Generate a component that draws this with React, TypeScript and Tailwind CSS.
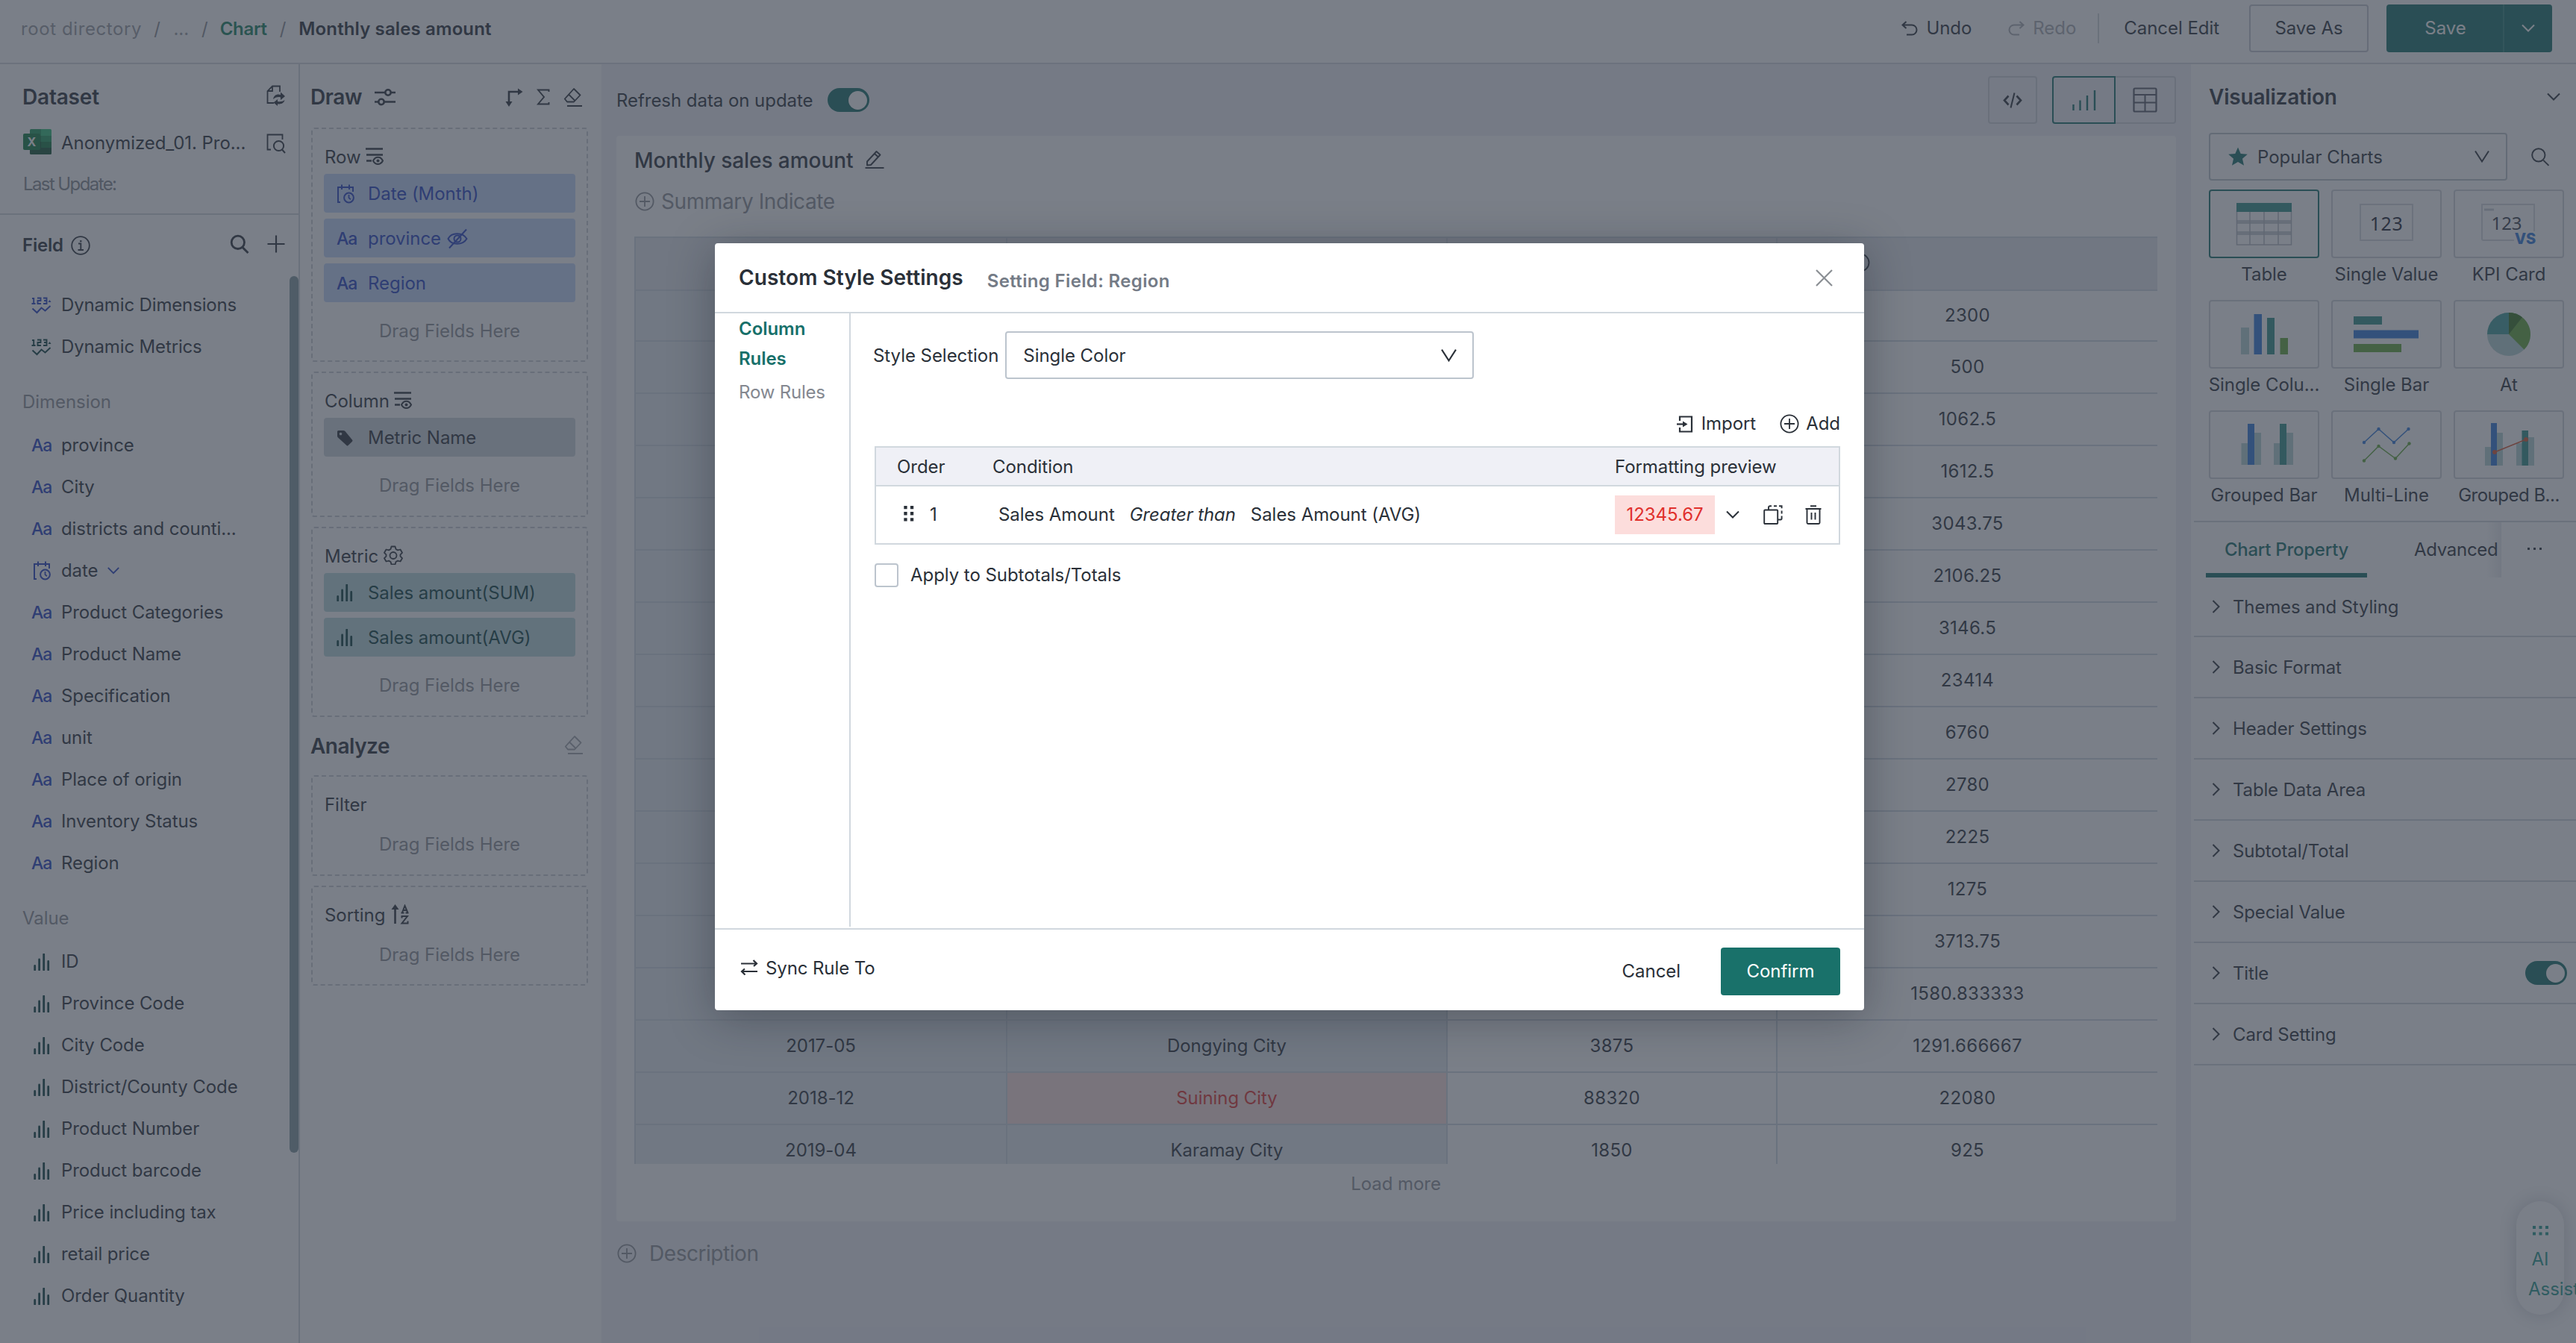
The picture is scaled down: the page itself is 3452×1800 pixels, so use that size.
import type { ReactNode } from "react";

type IconProps = { className?: string; children?: ReactNode; box?: string };

function Svg({ className = "", children, box = "0 0 24 24" }: IconProps) {
  return (
    <svg
      viewBox={box}
      fill="none"
      stroke="currentColor"
      strokeWidth={2}
      className={"block shrink-0 " + className}
    >
      {children}
    </svg>
  );
}

const SearchIcon = ({ className = "size-[26px]", w = 2.6 }: { className?: string; w?: number }) => (
  <Svg className={className}>
    <circle cx="10" cy="10" r="8" strokeWidth={w} />
    <path d="M16 16.5L22.6 23" strokeWidth={w} />
  </Svg>
);

const Chevron = ({ className = "" }: { className?: string }) => (
  <Svg className={className} box="0 0 20 20">
    <path d="M2 5.5l8 8 8-8" />
  </Svg>
);

const VChevron = ({ className = "" }: { className?: string }) => (
  <Svg className={className} box="0 0 20 20">
    <path d="M1 2.5L10 16.5 19 2.5" />
  </Svg>
);

const PlusCircle = ({ className = "size-[26px]" }: { className?: string }) => (
  <Svg className={className} box="0 0 26 26">
    <circle cx="13" cy="13" r="11.6" strokeWidth="1.8" />
    <path d="M13 6v14M6 13h14" strokeWidth="1.8" />
  </Svg>
);

const BarsIcon = ({ className = "text-[#0b3f3e]" }: { className?: string }) => (
  <Svg className={"h-[23px] w-[22px] " + className} box="0 0 22 23">
    <path d="M1.7 16.5V22M7.6 8V22M13.7 1V22M19.7 10.5V22" strokeWidth="2.8" strokeLinecap="round" />
  </Svg>
);

const CalendarIcon = () => (
  <Svg className="h-[26px] w-6 text-[#2440c2]" box="0 0 24 26">
    <path d="M5 24H2V4h20v6M7 0.5V7M17 0.5V7" strokeWidth="2" />
    <circle cx="16.5" cy="18" r="6.4" />
    <path d="M16.5 14v4.2l2.4 2" strokeWidth="1.8" />
  </Svg>
);

const DynamicIcon = ({ className }: { className: string }) => (
  <Svg className={"h-[23px] w-[27px] " + className} box="0 0 27 23">
    <path d="M1 2h2.2v7M0.5 9h5M8 1.5h4.500v3.500H8.500v4h4.500M16 1.500h4.500v7.500H16M17 5h3.500" strokeWidth="1.900" />
    <path d="M22.500 7l2-3 2 3z" fill="currentColor" stroke="none" />
    <path d="M1.500 15.500l6 5.500 6-6.500 5 4 7-6.500" strokeWidth="2" />
  </Svg>
);

const AaIcon = () => (
  <span className="text-[23px] font-medium tracking-[-1px] text-[#2440c2]">Aa</span>
);

const EraserIcon = ({ className = "" }: { className?: string }) => (
  <Svg className={"size-[26px] " + className} box="0 0 26 26">
    <path d="M5 19.500L1.800 15.500 14 2l8.500 8.500-8.500 9z" strokeWidth="1.800" strokeLinejoin="round" />
    <path d="M7 9.500l8.500 8.500M5 25h20" strokeWidth="1.800" />
  </Svg>
);

const LinesEyeIcon = () => (
  <Svg className="-ml-[2px] h-6 w-[25px]" box="0 0 25 24">
    <path d="M0 2.500h23M1 10.500h22M1 18.500h7" strokeWidth="2.400" />
    <path d="M10 18.500c3-6.500 10-6.500 13 0c-3 6-10 6-13 0z" strokeWidth="2" />
    <circle cx="16.500" cy="18.500" r="2" fill="currentColor" stroke="none" />
  </Svg>
);

const SlidersIcon = () => (
  <Svg className="h-[24px] w-[28px]" box="0 0 28 24">
    <path d="M0 6h14M22 6h6M0 18.500h5M13 18.500h15" strokeWidth="2.600" />
    <circle cx="18" cy="6" r="3.700" strokeWidth="2.600" />
    <circle cx="9" cy="18.500" r="3.700" strokeWidth="2.600" />
  </Svg>
);

const GearIcon = () => (
  <Svg className="-ml-[1px] size-[26px]" box="0 0 26 26">
    <path
      d="M10.500 1.500h5l1 3.500 2.500 1.400 3.500-.9 2.500 4.300-2.500 2.600v2.200l2.500 2.600-2.500 4.300-3.500-.9-2.500 1.400-1 3.500h-5l-1-3.500L7 20.600l-3.500.9L1 17.200l2.500-2.600v-2.200L1 9.800l2.500-4.300 3.500.9L9.500 5z"
      strokeWidth="1.800"
      strokeLinejoin="round"
    />
    <circle cx="13" cy="13.500" r="4.500" strokeWidth="1.800" />
  </Svg>
);

const GripIcon = () => (
  <svg viewBox="0 0 14 22" className="h-[21px] w-[14px] shrink-0" fill="currentColor">
    <path d="M0 0h4.500v4.500H0zM9 0h4.500v4.500H9zM0 8.500h4.500v4.500H0zM9 8.500h4.500v4.500H9zM0 17h4.500v4.500H0zM9 17h4.500v4.500H9z" />
  </svg>
);

function Toggle() {
  return (
    <div className="flex h-8 w-14 shrink-0 items-center justify-end rounded-full bg-[#17706a] pr-[3px]">
      <div className="size-[25px] rounded-full bg-white shadow" />
    </div>
  );
}

/* ---------- top bar ---------- */

function TopBar() {
  return (
    <header className="flex h-[86px] shrink-0 justify-between border-b-2 border-[#d6d9de] bg-white pb-2 pl-7 pr-8">
      <div className="flex items-center whitespace-pre pt-[2px] text-[#999ca1]">
        <span className="tracking-[0.6px]">root directory</span>
        <span className="ml-[16px] tracking-[0.6px] text-[#8a8d92]">/</span>
        <span className="ml-[17px]">...</span>
        <span className="ml-[17px] text-[#8a8d92]">/</span>
        <span className="ml-[16px] font-semibold tracking-[-0.3px] text-[#17805f]">Chart</span>
        <span className="ml-[17px] text-[#8a8d92]">/</span>
        <span className="ml-[17px] font-semibold tracking-[0.12px] text-[#2a3038]">Monthly sales amount</span>
      </div>
      <div className="flex items-center">
        <Svg className="mr-[11px] h-[20px] w-[22px]" box="0 0 22 20">
          <path d="M6.500 1L1.500 5.500l5 4.500M2 5.500h12a6.500 6.500 0 0 1 0 13H7" />
        </Svg>
        <span>Undo</span>
        <div className="ml-[49px] flex items-center text-[#a9acb2]">
          <Svg className="mr-[11px] h-[20px] w-[22px]" box="0 0 22 20">
            <path d="M15.500 1l5 4.500-5 4.500M20 5.500H8a6.500 6.500 0 0 0 0 13h7" />
          </Svg>
          <span>Redo</span>
        </div>
        <div className="ml-[29px] h-10 w-[2px] bg-[#d1d5da]" />
        <span className="ml-[33px]">Cancel Edit</span>
        <div className="ml-10 flex h-16 w-[160px] items-center justify-center rounded border-2 border-[#c3c8cf]">
          Save As
        </div>
        <div className="ml-[24px] flex h-16 w-[222px] items-center rounded bg-[#17706a] text-white">
          <span className="flex h-full w-[158px] items-center justify-center border-r-2 border-[#2f857d] pl-[2px]">
            Save
          </span>
          <span className="flex flex-1 justify-center">
            <Chevron className="size-5" />
          </span>
        </div>
      </div>
    </header>
  );
}

/* ---------- dataset panel ---------- */

type Field = { kind: "text" | "date" | "bars"; label: string };

const dimensions: Field[] = [
  { kind: "text", label: "province" },
  { kind: "text", label: "City" },
  { kind: "text", label: "districts and counti..." },
  { kind: "date", label: "date" },
  { kind: "text", label: "Product Categories" },
  { kind: "text", label: "Product Name" },
  { kind: "text", label: "Specification" },
  { kind: "text", label: "unit" },
  { kind: "text", label: "Place of origin" },
  { kind: "text", label: "Inventory Status" },
  { kind: "text", label: "Region" },
];

const values: Field[] = [
  "ID",
  "Province Code",
  "City Code",
  "District/County Code",
  "Product Number",
  "Product barcode",
  "Price including tax",
  "retail price",
  "Order Quantity",
].map((label) => ({ kind: "bars", label }));

function FieldRow({ field }: { field: Field }) {
  return (
    <div className="flex h-14 items-center pl-[41px]">
      <span className="flex w-[41px] pl-[1px]">
        {field.kind === "text" && <AaIcon />}
        {field.kind === "date" && (
          <span className="pl-[2px]">
            <CalendarIcon />
          </span>
        )}
        {field.kind === "bars" && (
          <span className="pl-[3px]">
            <BarsIcon />
          </span>
        )}
      </span>
      <span className="tracking-[-0.1px]">{field.label}</span>
      {field.kind === "date" && <Chevron className="ml-3 size-[18px] text-[#2440c2]" />}
    </div>
  );
}

function ExcelIcon() {
  return (
    <svg viewBox="0 0 38 34" className="block h-[34px] w-[38px] shrink-0">
      <path d="M9 1.500q0-1.500 1.500-1.500H24v9H9z" fill="#1f9a5c" />
      <path d="M24 0h12.500q1.500 0 1.500 1.500V9H24z" fill="#30bf79" />
      <path d="M9 9h15v8H9z" fill="#187a43" />
      <path d="M24 9h14v8H24z" fill="#1f9a5c" />
      <path d="M9 17h15v8H9z" fill="#145232" />
      <path d="M24 17h14v8H24z" fill="#127a40" />
      <path d="M9 25h29v7.500q0 1.500-1.500 1.500h-26Q9 34 9 32.500z" fill="#145232" />
      <rect x="0" y="6" width="23" height="22" rx="2" fill="#107c41" />
      <text x="11.500" y="23" textAnchor="middle" fontSize="16" fontWeight="700" fill="#fff" fontFamily="Inter, sans-serif">
        X
      </text>
    </svg>
  );
}

function DatasetPanel() {
  return (
    <aside className="relative flex w-[402px] shrink-0 flex-col overflow-hidden border-r-2 border-[#d1d6dd] bg-white">
      <div className="h-[202px] shrink-0 border-b-2 border-[#d1d6dd]">
        <div className="flex h-[88px] items-center justify-between pl-[30px] pr-[18px]">
          <span className="text-[28px] font-semibold tracking-[-0.2px]">Dataset</span>
          <Svg className="-mt-1 h-[28px] w-[25px]" box="0 0 25 28">
            <path d="M10 24H1.500V8L8 1.500h10V9M8 1.500V8H1.500" strokeWidth="1.800" />
            <path d="M9 19c1-6 6-7.500 10-6V9.500l6 5.500-6 5v-3.500c-4-1-7 0-10 2.500z" fill="currentColor" stroke="none" />
            <path d="M24.500 20c-1 4.500-5 6-9.500 5.200V28l-5.500-4.500L15 19v3c4 .7 7 0 9.500-2z" fill="currentColor" stroke="none" />
          </Svg>
        </div>
        <div className="flex h-9 items-center pl-[31px] pr-[17px]">
          <span className="-mt-[4px]">
            <ExcelIcon />
          </span>
          <span className="ml-[13px] flex-1">Anonymized_01. Pro...</span>
          <Svg className="h-[27px] w-[26px]" box="0 0 26 27">
            <path d="M6 21.500H1.500V1.500h20V8" strokeWidth="1.800" />
            <circle cx="16.500" cy="16.500" r="6.600" />
            <path d="M21 21.500l4 4.500" />
          </Svg>
        </div>
        <div className="flex h-[72px] items-center pl-[31px] pt-[2px] tracking-[-1.6px] text-[#85898f]">Last Update:</div>
      </div>
      <div className="flex h-[82px] shrink-0 items-center pl-[30px] pr-[18px]">
        <span className="font-semibold tracking-[-0.2px]">Field</span>
        <Svg className="ml-[10px] size-[26px]" box="0 0 26 26">
          <circle cx="13" cy="13" r="11.800" strokeWidth="1.800" />
          <path d="M10 10.500h3.300v8M9.500 19h7.500M12 7.300h2.500" strokeWidth="1.900" />
        </Svg>
        <SearchIcon className="-mt-1 ml-auto size-[26px]" />
        <Svg className="-mt-1 ml-[24px] size-6">
          <path d="M12 0.500v23M0.500 12h23" strokeWidth="2.200" />
        </Svg>
      </div>
      <div className="flex flex-col pt-[11px]">
        <div className="flex h-14 items-center pl-[42px]">
          <DynamicIcon className="text-[#2440c2]" />
          <span className="ml-[13px] tracking-[-0.15px]">Dynamic Dimensions</span>
        </div>
        <div className="flex h-14 items-center pl-[42px]">
          <DynamicIcon className="text-[#0b3f3e]" />
          <span className="ml-[13px] tracking-[-0.15px]">Dynamic Metrics</span>
        </div>
        <div className="mb-[2px] mt-[18px] flex h-14 items-center pl-[30px] text-[#8d9096]">Dimension</div>
        {dimensions.map((f) => (
          <FieldRow key={f.label} field={f} />
        ))}
        <div className="mb-[2px] mt-[18px] flex h-14 items-center pl-[30px] text-[#8d9096]">Value</div>
        {values.map((f) => (
          <FieldRow key={f.label} field={f} />
        ))}
      </div>
      <div className="absolute right-0 top-[284px] h-[1175px] w-3 rounded-full bg-[#81999f]" />
    </aside>
  );
}

/* ---------- draw panel ---------- */

function Pill({ tone, icon, label, extra }: { tone: string; icon: ReactNode; label: string; extra?: ReactNode }) {
  return (
    <div className={"flex h-[52px] items-center rounded-sm pl-[15px] pt-px " + tone}>
      <span className="flex w-[44px] items-center pl-[2px]">{icon}</span>
      <span>{label}</span>
      {extra}
    </div>
  );
}

function DropBox({
  title,
  icon,
  height,
  children,
}: {
  title: string;
  icon?: ReactNode;
  height: string;
  children?: ReactNode;
}) {
  return (
    <div className={"flex shrink-0 flex-col rounded border-2 border-dashed border-[#c9cdd3] px-[15px] pt-5 " + height}>
      <div className="flex h-8 items-center gap-2 pl-[1px]">
        <span className="pt-[3px]">{title}</span>
        {icon}
      </div>
      {children ? <div className="mt-2 flex flex-col gap-2">{children}</div> : null}
      <div className="flex h-[77px] shrink-0 items-center justify-center pt-px text-[#8d9096]">Drag Fields Here</div>
    </div>
  );
}

const EyeOff = () => (
  <Svg className="ml-2 size-[28px]" box="0 0 28 28">
    <path d="M1.500 14C6 5 21 5 26.500 14C21 23 6 23 1.500 14z" strokeWidth="2" />
    <circle cx="14" cy="14" r="4.500" strokeWidth="2" />
    <path d="M3 26.500L26 1.500" strokeWidth="2" />
  </Svg>
);

const blue = "bg-[#c2d5fa] text-[#2440c2]";
const teal = "bg-[#b8d9dc] text-[#0b3f3e]";

function DrawPanel() {
  return (
    <section className="flex w-[404px] shrink-0 flex-col gap-[13px] bg-white pl-[15px] pr-[18px]">
      <div className="-mb-[16px] flex h-[88px] shrink-0 items-center pr-[7px]">
        <span className="-ml-px text-[28px] font-semibold tracking-[-0.4px]">Draw</span>
        <span className="ml-[17px]">
          <SlidersIcon />
        </span>
        <span className="ml-auto flex items-center gap-[18px]">
          <Svg className="h-[25px] w-[24px]" box="0 0 24 25">
            <path d="M5 20V5h14" strokeWidth="2.600" />
            <path d="M17 0.500l6.500 4.500L17 9.500zM0.500 18h9L5 25z" fill="currentColor" stroke="none" />
          </Svg>
          <Svg className="h-[22px] w-[18px]" box="0 0 18 22">
            <path d="M16.500 4V1.500H2l8 9.500-8 9.500h14.500V18" strokeWidth="1.900" />
          </Svg>
          <EraserIcon />
        </span>
      </div>
      <DropBox title="Row" height="h-[314px]" icon={<LinesEyeIcon />}>
        <Pill tone={blue} icon={<CalendarIcon />} label="Date (Month)" />
        <Pill tone={blue} icon={<AaIcon />} label="province" extra={<EyeOff />} />
        <Pill tone={blue} icon={<AaIcon />} label="Region" />
      </DropBox>
      <DropBox title="Column" height="h-[195px]" icon={<LinesEyeIcon />}>
        <Pill
          tone="bg-[#ced5dc]"
          icon={
            <svg viewBox="0 0 22 22" className="size-[22px]" fill="currentColor">
              <path d="M1 2.500Q1 1 2.500 1H9q1.500 0 2.500 1L21 13.500q1 1 0 2.200L15.500 21q-1 1-2 0L2 10.500q-1-1-1-2.300zM5.500 3.700a1.800 1.800 0 1 0 .01 0z" fillRule="evenodd" />
            </svg>
          }
          label="Metric Name"
        />
      </DropBox>
      <DropBox title="Metric" height="h-[255px]" icon={<GearIcon />}>
        <Pill tone={teal} icon={<BarsIcon />} label="Sales amount(SUM)" />
        <Pill tone={teal} icon={<BarsIcon />} label="Sales amount(AVG)" />
      </DropBox>
      <div className="-my-[3px] flex h-[58px] shrink-0 items-center justify-between pr-[6px]">
        <span className="-ml-px text-[28px] font-semibold tracking-[-0.5px]">Analyze</span>
        <EraserIcon className="-mt-1 text-[#a0a4aa]" />
      </div>
      <DropBox title="Filter" height="h-[135px]" />
      <DropBox
        title="Sorting"
        height="h-[134px]"
        icon={
          <Svg className="h-[27px] w-[24px]" box="0 0 24 27">
            <path d="M5.500 26V5" strokeWidth="2.600" />
            <path d="M0.500 7L5.500 0l5 7z" fill="currentColor" stroke="none" />
            <path d="M13.500 11.500h4M19.500 11.500h4M15 11l3.500-9 3.800 9M16.500 8h4.500" strokeWidth="2" />
            <path d="M14.500 18.500V16h7.500L14.500 25.500H22.500V22.500" strokeWidth="2" />
          </Svg>
        }
      />
    </section>
  );
}

/* ---------- canvas ---------- */

type Row = { month?: string; city?: string; sum?: string; avg: string; hot?: boolean };

const rows: Row[] = [
  { avg: "2300" },
  { avg: "500" },
  { avg: "1062.5" },
  { avg: "1612.5" },
  { avg: "3043.75" },
  { avg: "2106.25" },
  { avg: "3146.5" },
  { avg: "23414" },
  { avg: "6760" },
  { avg: "2780" },
  { avg: "2225" },
  { avg: "1275" },
  { avg: "3713.75" },
  { avg: "1580.833333" },
  { month: "2017-05", city: "Dongying City", sum: "3875", avg: "1291.666667" },
  { month: "2018-12", city: "Suining City", sum: "88320", avg: "22080", hot: true },
  { month: "2019-04", city: "Karamay City", sum: "1850", avg: "925" },
];

const cols = "grid shrink-0 grid-cols-[498px_590px_442px_511px]";
const cell = "flex items-center justify-center border-b-2 border-r-2 border-[#d1d8e0] ";

function Canvas() {
  return (
    <main className="flex w-[2130px] shrink-0 flex-col bg-[#eff0f5] pl-5 pr-5">
      <div className="flex h-24 shrink-0 items-center">
        <span className="pt-[2px] tracking-[-0.05px]">Refresh data on update</span>
        <div className="ml-5">
          <Toggle />
        </div>
        <div className="ml-auto flex h-16 w-[66px] items-center justify-center rounded border-2 border-[#cfd4da]">
          <Svg className="h-[21px] w-[26px]" box="0 0 26 21">
            <path d="M7.500 4.500L2 10.500l5.500 6M18.500 4.500l5.500 6-5.500 6" strokeWidth="2.600" />
            <path d="M15.500 0.500l-5 20" />
          </Svg>
        </div>
        <div className="ml-5 flex h-16 w-[85px] items-center justify-center rounded-l border-2 border-[#17706a]">
          <Svg className="h-[27px] w-8 text-[#17706a]" box="0 0 32 27">
            <path d="M1.500 19v8M10.500 13.500V27M20 7v20M30 0v27" strokeWidth="2.400" />
          </Svg>
        </div>
        <div className="flex h-16 w-[81px] items-center justify-center rounded-r border-2 border-l-0 border-[#cfd4da] text-[#555a66]">
          <Svg className="h-[34px] w-[33px]" box="0 0 33 34">
            <rect x="1.500" y="1.500" width="30" height="31" rx="1.500" strokeWidth="2.200" />
            <path d="M1.500 10h30M1.500 20.500h30M16.500 10v22" strokeWidth="2" />
          </Svg>
        </div>
      </div>
      <div className="flex h-[1455px] shrink-0 flex-col rounded-sm bg-white pl-6 pr-[25px]">
        <div className="flex h-[66px] shrink-0 items-center">
          <span className="text-[28px] font-medium">Monthly sales amount</span>
          <Svg className="ml-[16px] mt-[-4px] size-[26px]" box="0 0 26 26">
            <path d="M3 16.500L15.500 3l5 4.500L8 21l-5 .5zM13 6l5 4.500" strokeWidth="1.900" strokeLinejoin="round" />
            <path d="M0.500 25h25" strokeWidth="1.900" />
          </Svg>
        </div>
        <div className="flex h-[44px] shrink-0 items-center text-[28px] tracking-[-0.4px] text-[#8d9096]">
          <PlusCircle className="ml-px mr-[9px] size-[26px]" />
          Summary Indicate
        </div>
        <div className="mt-[25px] flex h-[1243px] shrink-0 flex-col overflow-hidden border-l-2 border-t-2 border-[#d1d8e0]">
          <div className={cols + " h-[71px] bg-[#e3e7ee]"}>
            <div className={cell} />
            <div className={cell} />
            <div className={cell} />
            <div className={cell}>
              <Svg className="ml-[-288px] mt-[-3px] size-[26px]" box="0 0 26 26">
                <circle cx="13" cy="13" r="11.500" strokeWidth="1.800" />
              </Svg>
            </div>
          </div>
          {rows.map((r, i) => (
            <div key={i} className={cols + (i === 0 ? " h-[68px]" : " h-[70px]")}>
              <div className={cell + "bg-[#e3e9f0]"}>{r.month}</div>
              <div className={cell + (r.hot ? "bg-[#fbdedd] text-[#e0302c]" : "bg-[#e3e9f0]")}>{r.city}</div>
              <div className={cell + "tracking-[0.3px]"}>{r.sum}</div>
              <div className={cell + "tracking-[0.3px]"}>{r.avg}</div>
            </div>
          ))}
        </div>
        <div className="flex h-[54px] items-center justify-center text-[#8d9096]">Load more</div>
      </div>
      <div className="flex h-[86px] items-center text-[28px] tracking-[-0.45px] text-[#8d9096]">
        <PlusCircle className="ml-[1px] mr-[17px] size-[26px]" />
        Description
      </div>
    </main>
  );
}

/* ---------- visualization panel ---------- */

const c = { teal: "#2f8f88", blue: "#2f78d8", green: "#62a83a", pale: "#b3d3d2" };

function Thumb({ kind }: { kind: string }) {
  const base = "block h-[88px] w-[144px]";
  switch (kind) {
    case "table":
      return (
        <svg viewBox="0 0 144 88" className={base}>
          <path d="M36 39h72v5H36zM36 54h72v5H36z" fill="#c8cdd3" />
          <path d="M35.500 26v46h73V26M53 27v45M72 27v45M91 27v45" fill="none" stroke="#b4b9c0" strokeWidth="1.500" />
          <rect x="35" y="16" width="74" height="12" fill={c.teal} />
        </svg>
      );
    case "single":
      return (
        <svg viewBox="0 0 144 88" className={base}>
          <rect x="37" y="18" width="70" height="48" fill="none" stroke="#d5d9de" strokeWidth="2" />
          <text x="72" y="52.500" textAnchor="middle" fontSize="25" letterSpacing="0.500" fontFamily="Noto Sans, sans-serif" fill="#1d2230">123</text>
        </svg>
      );
    case "kpi":
      return (
        <svg viewBox="0 0 144 88" className={base}>
          <path d="M79 66H38a2 2 0 0 1-2-2V18h70v36" fill="none" stroke="#d5d9de" strokeWidth="2" />
          <path d="M39 25h13" stroke="#c8cdd3" strokeWidth="3" />
          <text x="69" y="51.500" textAnchor="middle" fontSize="24" fontFamily="Noto Sans, sans-serif" fill="#3a404c">123</text>
          <text x="94" y="70.500" textAnchor="middle" fontSize="20" fontWeight="800" fontFamily="Inter, sans-serif" fill={c.blue}>VS</text>
        </svg>
      );
    case "column":
      return (
        <svg viewBox="0 0 144 88" className={base}>
          <rect x="41" y="35" width="11" height="36" fill={c.pale} />
          <rect x="58.500" y="17" width="10.500" height="54" fill={c.blue} />
          <rect x="76" y="22" width="10" height="49" fill={c.teal} />
          <rect x="93.500" y="49" width="10.500" height="22" fill={c.green} />
        </svg>
      );
    case "bar":
      return (
        <svg viewBox="0 0 144 88" className={base}>
          <rect x="28" y="20" width="38" height="11" fill={c.teal} />
          <rect x="28" y="38.500" width="87" height="11" fill={c.blue} />
          <rect x="28" y="57" width="64" height="11" fill={c.green} />
        </svg>
      );
    case "pie":
      return (
        <svg viewBox="0 0 144 88" className={base}>
          <circle cx="72" cy="44" r="29" fill={c.pale} />
          <path d="M72 44V15a29 29 0 0 1 20.500 49.500z" fill={c.green} />
          <path d="M72 44V15a29 29 0 0 1 18 6.200z" fill="#35721f" />
          <path d="M72 44H43a29 29 0 0 1 29-29z" fill="#3f9d98" />
        </svg>
      );
    case "grouped":
      return (
        <svg viewBox="0 0 144 88" className={base}>
          <path d="M41.500 42H50v29h-8.500zM59 28h9v43h-9zM85 42h8v29h-8zM102 28h9v43h-9z" fill={c.pale} />
          <rect x="50" y="16" width="9" height="55" fill={c.blue} />
          <rect x="93" y="16" width="9" height="55" fill={c.teal} />
        </svg>
      );
    case "lines":
      return (
        <svg viewBox="0 0 144 88" className={base} fill="none" strokeWidth="1.500">
          <path d="M42 41l19.500-18 20.500 18 19.500-18" stroke={c.blue} />
          <path d="M42 65.500L61.500 46 84 62.500l18.500-20" stroke={c.green} />
          <g fill={c.blue}>
            <circle cx="42" cy="41" r="2.200" />
            <circle cx="61.500" cy="23" r="2.200" />
            <circle cx="82" cy="41" r="2.200" />
            <circle cx="101.500" cy="23" r="2.200" />
          </g>
          <g fill={c.green}>
            <circle cx="42" cy="65.500" r="2.200" />
            <circle cx="61.500" cy="46" r="2.200" />
            <circle cx="84" cy="62.500" r="2.200" />
            <circle cx="102.500" cy="42.500" r="2.200" />
          </g>
        </svg>
      );
    default:
      return (
        <svg viewBox="0 0 144 88" className={base}>
          <path d="M40 47h8v25h-8zM56 28h8v44h-8zM82 42h8v30h-8zM98 34h8v38h-8z" fill={c.pale} />
          <rect x="48" y="15" width="8" height="57" fill={c.blue} />
          <rect x="89.500" y="25" width="8.500" height="47" fill={c.teal} />
          <path d="M53 54l42-17" stroke="#d8552f" strokeWidth="1.500" />
          <circle cx="53" cy="54" r="3" fill="#d8552f" />
          <circle cx="95" cy="37" r="3" fill="#d8552f" />
        </svg>
      );
  }
}

const charts = [
  ["table", "Table"],
  ["single", "Single Value"],
  ["kpi", "KPI Card"],
  ["column", "Single Colu..."],
  ["bar", "Single Bar"],
  ["pie", "At"],
  ["grouped", "Grouped Bar"],
  ["lines", "Multi-Line"],
  ["combo", "Grouped B..."],
];

const sections = [
  "Themes and Styling",
  "Basic Format",
  "Header Settings",
  "Table Data Area",
  "Subtotal/Total",
  "Special Value",
  "Title",
  "Card Setting",
];

function VisualPanel() {
  return (
    <aside className="flex min-w-0 flex-1 flex-col overflow-hidden bg-white pl-1">
      <div className="flex h-[88px] shrink-0 items-center justify-between pl-5 pr-5">
        <span className="text-[28px] font-semibold tracking-[-0.2px]">Visualization</span>
        <Chevron className="size-5" />
      </div>
      <div className="mt-1 flex h-16 shrink-0 items-center pl-5 pr-[35px]">
        <div className="flex h-16 w-[400px] items-center rounded border-2 border-[#bcc3cb] pl-6 pr-[22px]">
          <svg viewBox="0 0 24 24" className="size-[26px]" fill="#17706a">
            <path d="M12 0.500l3.400 7.700 8.400.8-6.300 5.500 1.900 8.300L12 18.500l-7.400 4.300 1.900-8.300L.2 9l8.400-.8z" />
          </svg>
          <span className="ml-[13px] flex-1 pt-px">Popular Charts</span>
          <VChevron className="size-5" />
        </div>
        <SearchIcon className="ml-auto size-[26px]" w={1.8} />
      </div>
      <div className="grid shrink-0 grid-cols-[repeat(3,148px)] gap-x-4 pl-5 pt-3">
        {charts.map(([kind, label], i) => (
          <div key={kind} className="flex h-[148px] flex-col items-center">
            <div
              className={
                "h-[92px] w-[148px] rounded-sm border-2 " + (i === 0 ? "border-[#17706a]" : "border-[#cfd4da]")
              }
            >
              <Thumb kind={kind} />
            </div>
            <span
              className={
                "mt-[6px] whitespace-nowrap " + (label === "Grouped B..." ? "tracking-[-0.5px]" : "tracking-[-0.05px]")
              }
            >
              {label}
            </span>
          </div>
        ))}
      </div>
      <div className="flex h-[76px] shrink-0 border-t-2 border-[#d1d6dd]">
        <div className="flex w-[412px] overflow-hidden pl-4">
          <div className="flex w-[216px] shrink-0 items-center justify-center border-b-[6px] border-[#17706a] pt-[5px] font-medium tracking-[-0.25px] text-[#17706a]">
            Chart Property
          </div>
          <span className="ml-[63px] pt-[21px] tracking-[-0.3px]">Advanced</span>
        </div>
        <div className="-ml-5 h-[74px] w-5 bg-linear-to-r from-[#70788c]/0 to-[#70788c]/15" />
        <div className="flex gap-[5px] pl-[35px] pt-[34px]">
          <i className="size-[3px] bg-current" />
          <i className="size-[3px] bg-current" />
          <i className="size-[3px] bg-current" />
        </div>
      </div>
      {sections.map((s, i) => (
        <div
          key={s}
          className={
            "flex shrink-0 items-center border-b-2 border-[#d1d6dd] pl-6 pr-3 " + (i === 0 ? "h-[80px]" : "h-[82px]")
          }
        >
          <Chevron className="-ml-1 mr-[12px] size-5 -rotate-90" />
          <span className="flex-1 pt-px tracking-[-0.15px]">{s}</span>
          {s === "Title" && <Toggle />}
        </div>
      ))}
    </aside>
  );
}

function Assistant() {
  return (
    <div className="absolute right-4 top-[1610px] flex h-[152px] w-16 flex-col items-center rounded-full bg-white pt-[33px] text-[#23998c] shadow-[0_0_24px_rgba(40,50,70,0.25)]">
      <svg viewBox="0 0 21 13" className="h-[13px] w-[21px]" fill="currentColor">
        <path d="M0 0h4v4H0zM8.500 0h4v4h-4zM17 0h4v4h-4zM0 8.500h4v4H0zM8.500 8.500h4v4h-4zM17 8.500h4v4h-4z" />
      </svg>
      <span className="mt-[12px] leading-10">AI</span>
      <span className="self-start whitespace-nowrap pl-4 leading-10">Assistant</span>
    </div>
  );
}

/* ---------- dialog ---------- */

function Dialog() {
  return (
    <div className="flex h-[1028px] w-[1540px] flex-col rounded bg-white shadow-[0_10px_60px_rgba(20,25,35,0.35)]">
      <div className="flex h-[94px] shrink-0 items-center border-b-2 border-[#d1d8de] pl-8 pr-[42px]">
        <span className="text-[28px] font-semibold tracking-[0.07px]">Custom Style Settings</span>
        <span className="ml-[32px] pt-[9px] font-semibold tracking-[0.35px] text-[#747b86]">Setting Field: Region</span>
        <Svg className="ml-auto size-[23px] text-[#8b8f94]" box="0 0 23 23">
          <path d="M1 1l21 21M22 1L1 22" strokeWidth="2.200" />
        </Svg>
      </div>
      <div className="flex flex-1">
        <nav className="mb-[2px] w-[182px] shrink-0 border-r-2 border-[#d1d8de] pl-8 leading-10">
          <div className="w-[110px] pt-px font-semibold text-[#17706a]">Column Rules</div>
          <div className="mt-[5px] tracking-[-0.2px] text-[#848890]">Row Rules</div>
        </nav>
        <div className="flex flex-1 flex-col pl-[32px] pr-8 pt-6">
          <div className="-ml-[2px] flex h-16 items-center">
            <span className="pt-px">Style Selection</span>
            <div className="ml-[9px] flex h-16 w-[628px] items-center justify-between rounded border-2 border-[#bcc4cd] pl-[22px] pr-[21px]">
              <span className="pt-px">Single Color</span>
              <VChevron className="size-[21px]" />
            </div>
          </div>
          <div className="mt-[41px] flex h-[38px] items-center justify-end">
            <Svg className="mr-[11px] h-[23px] w-[22px]" box="0 0 22 23">
              <path d="M4 7V1.500h16v20H4V16" strokeWidth="2.200" />
              <path d="M0 11.500h9" strokeWidth="2.200" />
              <path d="M8 7.500l6.500 4L8 15.500z" fill="currentColor" stroke="none" />
            </Svg>
            <span>Import</span>
            <PlusCircle className="ml-[32px] mr-[9px] size-[26px]" />
            <span>Add</span>
          </div>
          <div className="mt-[11px] border-2 border-[#d1d8de]">
            <div className="flex h-[52px] items-center border-b-2 border-[#d1d8de] bg-[#eff0f6] pl-7 pt-px">
              <span className="w-[128px]">Order</span>
              <span className="w-[834px]">Condition</span>
              <span>Formatting preview</span>
            </div>
            <div className="flex h-[76px] items-center pl-[37px] pr-[23px]">
              <span className="-mt-1">
                <GripIcon />
              </span>
              <span className="ml-[21px] w-[92px]">1</span>
              <span>Sales Amount</span>
              <span className="ml-5 italic tracking-[-0.1px]">Greater than</span>
              <span className="ml-5">Sales Amount (AVG)</span>
              <div className="ml-auto flex h-[52px] w-[134px] items-center justify-center bg-[#fcdddc] text-[#e0302c]">
                12345.67
              </div>
              <Chevron className="ml-[14px] size-5" />
              <Svg className="ml-[31px] size-[26px]" box="0 0 26 26">
                <rect x="1.200" y="6.500" width="18" height="18.500" rx="1" strokeWidth="1.900" />
                <path d="M7 6V3Q7 1.200 9 1.200h2M14 1.200h4M21 1.200h3.600v3M24.600 7.500v4M24.600 14.500V18Q24.600 19.500 23 19.500h-3.500" strokeWidth="1.900" />
              </Svg>
              <Svg className="ml-[30px] h-[26px] w-[22px]" box="0 0 22 26">
                <path d="M0.500 5h21M7 1.300h8M2.500 5v18.500q0 1.500 1.500 1.500h14q1.500 0 1.500-1.500V5M8.500 10v9.500M13.500 10v9.500" strokeWidth="1.900" />
              </Svg>
            </div>
          </div>
          <div className="mt-[25px] flex items-center">
            <div className="size-8 rounded border-2 border-[#bcc4cd]" />
            <span className="ml-4">Apply to Subtotals/Totals</span>
          </div>
        </div>
      </div>
      <div className="flex h-[110px] shrink-0 items-center border-t-2 border-[#d1d8de] pl-[34px] pr-8 pt-1">
        <Svg className="-mt-3 mr-[10px] h-[21px] w-6" box="0 0 24 21">
          <path d="M1 5.500h21M17.500 1l4.500 4.500-4 3.500M23 16H2M6.500 20.500L2 16l4-3.500" strokeWidth="2.200" />
        </Svg>
        <span className="-mt-2 tracking-[-0.1px]">Sync Rule To</span>
        <span className="ml-auto">Cancel</span>
        <div className="ml-[54px] flex h-16 w-40 items-center justify-center rounded bg-[#19716a] text-white">
          Confirm
        </div>
      </div>
    </div>
  );
}

export default function App() {
  return (
    <div className="relative flex h-[1800px] w-[3452px] flex-col overflow-hidden bg-white font-['Inter','Liberation_Sans',sans-serif] text-[24px] leading-8 tracking-[-0.05px] text-[#2a3038]">
      <TopBar />
      <div className="flex min-h-0 flex-1">
        <DatasetPanel />
        <DrawPanel />
        <Canvas />
        <VisualPanel />
      </div>
      <Assistant />
      <div className="absolute inset-0 flex justify-center bg-[rgb(53_60_75/0.66)] pl-1 pt-[326px]">
        <Dialog />
      </div>
    </div>
  );
}
